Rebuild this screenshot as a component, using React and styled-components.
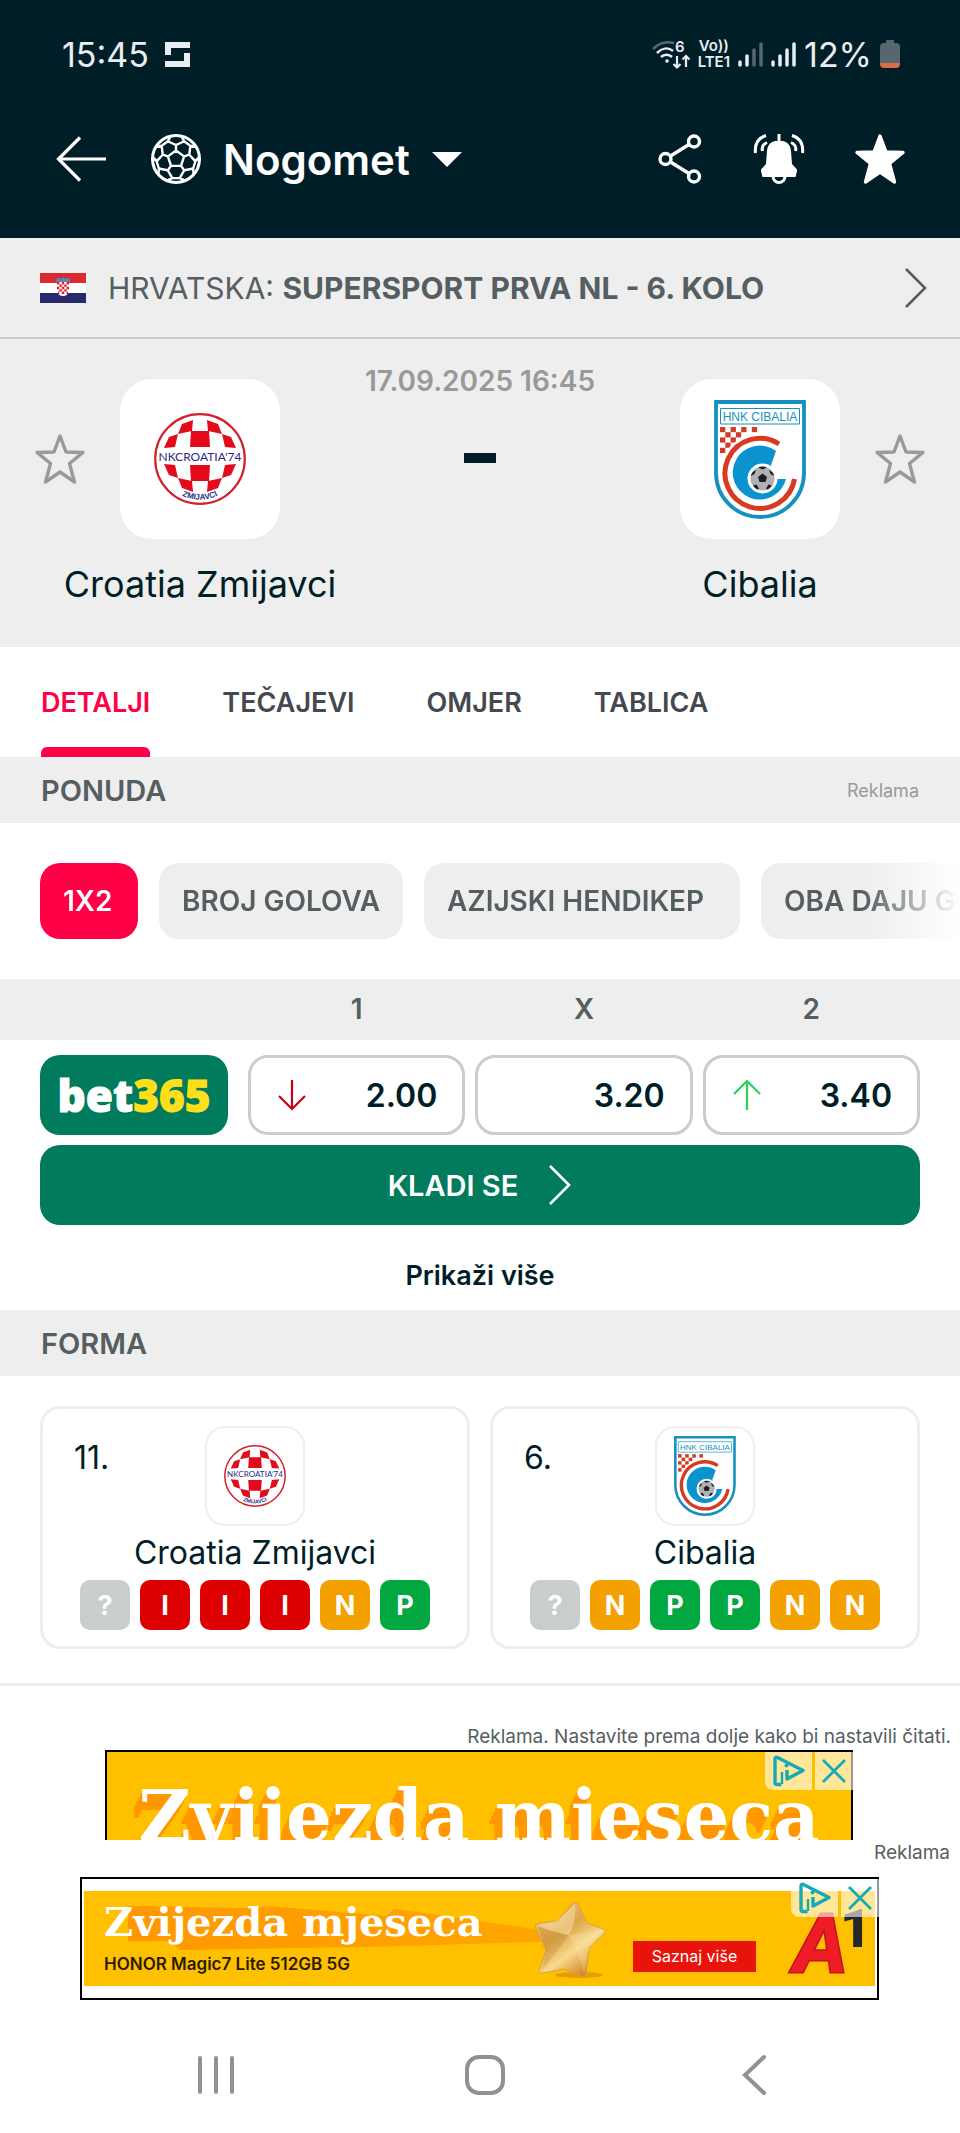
import styled, { createGlobalStyle } from 'styled-components'
import { useState } from 'react'

const GlobalStyle = createGlobalStyle`
    * {
        box-sizing: border-box;
    }
    body {
        margin: 0;
        background: #fff;
        color: #001e28;
        font-family: Inter, "Liberation Sans", sans-serif;
    }
    button {
        font-family: inherit;
        border: 0;
        margin: 0;
        padding: 0;
        background: none;
        color: inherit;
        cursor: pointer;
    }
    a {
        color: inherit;
        text-decoration: none;
    }
    h1, h2, p {
        margin: 0;
    }
    svg {
        display: block;
        flex: none;
        overflow: visible;
    }
`

const Page = styled.div`
    display: flex;
    flex-direction: column;
    min-height: 100vh;
`

/* ---------- header ---------- */

const Header = styled.header`
    background: #001e28;
    color: #fff;
    padding: 14px 0;
`

const StatusBar = styled.div`
    display: flex;
    align-items: center;
    justify-content: space-between;
    height: 80px;
    padding: 0 60px 0 62px;
    font-size: 34px;
    color: #e9eef2;
`

const StatusGroup = styled.div`
    display: flex;
    align-items: center;
    gap: ${props => props.$gap}px;
`

const Volte = styled.div`
    display: flex;
    flex-direction: column;
    font-size: 15px;
    line-height: 16px;
    font-weight: 600;
    text-align: center;
`

const Toolbar = styled.div`
    display: flex;
    align-items: center;
    height: 130px;
    padding: 0 55px;
`

const SportButton = styled.button`
    display: flex;
    align-items: center;
    gap: 22px;
    margin-left: 44px;
`

const SportTitle = styled.h1`
    font-size: 42px;
    font-weight: 600;
`

const Actions = styled.div`
    display: flex;
    align-items: center;
    gap: 50px;
    margin-left: auto;
`

const LeagueLink = styled.a`
    display: flex;
    align-items: center;
    gap: 22px;
    height: 101px;
    padding: 0 32px 0 40px;
    background: #eee;
    border-bottom: 2px solid #c8cdcd;
    color: #555e61;
    font-size: 30px;
    svg:last-child {
        margin-left: auto;
    }
`

/* ---------- match ---------- */

const Match = styled.section`
    display: grid;
    grid-template-columns: minmax(0, 5fr) minmax(0, 2fr) minmax(0, 5fr);
    height: 308px;
    padding-top: 24px;
    background: #eee;
`

const Team = styled.div`
    display: grid;
    grid-template-columns: 1fr 160px 1fr;
    justify-items: center;
    align-content: start;
    align-items: center;
    row-gap: 15px;
    padding-top: 16px;
`

const TeamLogo = styled.div`
    grid-column: 2;
    grid-row: 1;
    display: flex;
    align-items: center;
    justify-content: center;
    width: 160px;
    height: 160px;
    border-radius: 32px;
    background: #fff;
`

const FavButton = styled.button`
    grid-column: ${props => props.$side === 'left' ? 1 : 3};
    grid-row: 1;
`

const TeamName = styled.h2`
    grid-column: 1 / -1;
    font-size: 36px;
    line-height: 60px;
    font-weight: 400;
`

const Kickoff = styled.div`
    display: flex;
    flex-direction: column;
    align-items: center;
    white-space: nowrap;
`

const DateText = styled.time`
    color: #999;
    font-size: 28px;
    line-height: 36px;
    font-weight: 600;
`

const ScoreDash = styled.div`
    width: 32px;
    height: 10px;
    margin-top: 54px;
    background: #001e28;
`

/* ---------- tabs and chips ---------- */

const Tabs = styled.nav`
    display: flex;
    gap: 72px;
    height: 110px;
    padding: 0 41px;
`

const Tab = styled.button`
    display: flex;
    flex-direction: column;
    justify-content: center;
    position: relative;
    font-size: 27px;
    font-weight: 600;
    color: ${props => props.$active ? '#ff0046' : '#44484f'};
    &::after {
        content: "";
        display: ${props => props.$active ? 'block' : 'none'};
        position: absolute;
        left: 0;
        right: 0;
        bottom: 0;
        height: 10px;
        border-radius: 6px 6px 0 0;
        background: #ff0046;
    }
`

const SectionTitle = styled.div`
    display: flex;
    align-items: center;
    justify-content: space-between;
    height: 66px;
    padding: 0 41px;
    background: #eee;
    color: #555e61;
    h2 {
        font-size: 29px;
        font-weight: 600;
    }
    span {
        color: #999;
        font-size: 18px;
    }
`

const Chips = styled.div`
    display: grid;
    grid-template-columns: 98px 244px 316px 270px;
    gap: 21px;
    padding: 40px 0 40px 40px;
    overflow: hidden;
    mask-image: linear-gradient(to right, #000 90%, transparent 100%);
`

const Chip = styled.button`
    height: 76px;
    padding: 0 23px;
    border-radius: 20px;
    font-size: 28px;
    font-weight: 600;
    text-align: left;
    white-space: nowrap;
    background: ${props => props.$active ? '#ff0046' : '#eee'};
    color: ${props => props.$active ? '#fff' : '#555e61'};
`

/* ---------- odds ---------- */

const OddsTable = styled.table`
    display: block;
    tr {
        display: grid;
        grid-template-columns: 198px 1fr 1fr 1fr;
        gap: 10px;
        padding: 0 40px;
    }
    thead, tbody {
        display: block;
    }
    thead {
        background: #eee;
    }
    tbody {
        padding: 15px 0 10px;
    }
    th, td {
        padding: 0;
    }
    thead th {
        height: 61px;
        line-height: 61px;
        font-size: 28px;
        font-weight: 600;
        color: #555e61;
    }
    tbody th {
        padding-right: 10px;
    }
`

const Bookmaker = styled.a`
    display: flex;
    align-items: center;
    justify-content: center;
    height: 80px;
    border-radius: 20px;
    background: #007b5b;
    color: #fff;
    font-family: "Open Sans", "Noto Sans", sans-serif;
    font-size: 44px;
    font-weight: 800;
    -webkit-text-stroke: 1px currentColor;
    span {
        color: #ffdf1b;
    }
`

const OddButton = styled.button`
    display: flex;
    align-items: center;
    justify-content: space-between;
    width: 100%;
    height: 80px;
    padding: 0 25px 0 27px;
    border: 3px solid #c8cdcd;
    border-radius: 20px;
    font-size: 32px;
    font-weight: 600;
    span {
        margin-left: auto;
    }
`

const BetButton = styled.button`
    display: flex;
    align-items: center;
    justify-content: center;
    gap: 30px;
    height: 80px;
    margin: 0 40px;
    border-radius: 20px;
    background: #007b5b;
    color: #fff;
    font-size: 29px;
    font-weight: 600;
`

const ShowMore = styled.button`
    height: 85px;
    padding-top: 16px;
    font-size: 27px;
    font-weight: 600;
`

/* ---------- form ---------- */

const FormGrid = styled.section`
    display: grid;
    grid-template-columns: 1fr 1fr;
    gap: 20px;
    padding: 30px 40px 34px;
    border-bottom: 3px solid #eee;
`

const FormCard = styled.article`
    display: grid;
    grid-template-columns: 1fr 100px 1fr;
    justify-items: center;
    align-content: start;
    height: 243px;
    padding-top: 17px;
    border: 3px solid #eee;
    border-radius: 20px;
`

const Rank = styled.span`
    justify-self: start;
    padding: 12px 0 0 31px;
    font-size: 32px;
    line-height: 40px;
`

const SmallLogo = styled.div`
    display: flex;
    align-items: center;
    justify-content: center;
    grid-column: 2;
    width: 100px;
    height: 100px;
    border: 2px solid #eee;
    border-radius: 20px;
`

const FormName = styled.p`
    grid-column: 1 / -1;
    font-size: 32px;
    line-height: 54px;
`

const Results = styled.div`
    grid-column: 1 / -1;
    display: flex;
    gap: 10px;
`

const resultColors = {
    '?': '#c8cdcd',
    I: '#dc0000',
    N: '#f3a000',
    P: '#00a83f'
}

const Result = styled.span`
    display: flex;
    align-items: center;
    justify-content: center;
    width: 50px;
    height: 50px;
    border-radius: 10px;
    background: ${props => resultColors[props.$result]};
    color: #fff;
    font-size: 27px;
    font-weight: 700;
`

/* ---------- ads ---------- */

const AdSpace = styled.div`
    padding-top: 38px;
`

const AdLabel = styled.p`
    padding-right: ${props => props.$inset}px;
    color: #555e61;
    font-size: 19px;
    line-height: 26px;
    text-align: right;
`

const AdWindow = styled.div`
    height: 90px;
    overflow: hidden;
    padding: 0 107px 0 105px;
`

const AdLarge = styled.a`
    display: flex;
    justify-content: center;
    position: relative;
    height: 180px;
    padding-top: 20px;
    border: 2px solid #000;
    background: #ffc000;
`

const AdTitle = styled.span`
    font-family: "DejaVu Serif", serif;
    font-weight: 700;
    font-size: ${props => props.$large ? 72 : 40}px;
    line-height: ${props => props.$large ? 90 : 48}px;
    color: #fff;
    white-space: nowrap;
    text-shadow: ${props => props.$large
        ? '-2px 4px 0 #ff9800, -4px 8px 0 #ff9800, -6px 12px 0 #ff9800, -8px 16px 0 #ff9800'
        : 'none'};
`

const AdBanner = styled.a`
    position: relative;
    margin: 11px 81px 16px 80px;
    padding: 12px 2px;
    border: 2px solid #000;
`

const AdBody = styled.span`
    position: relative;
    isolation: isolate;
    display: flex;
    align-items: center;
    height: 95px;
    padding-left: 20px;
    background: #ffc000;
    /* long shadow that runs from the headline to the star */
    &::before {
        content: "";
        position: absolute;
        z-index: -1;
        left: 44px;
        top: 15px;
        width: 430px;
        height: 44px;
        background: linear-gradient(to right, #ff9800, #ffa600);
        clip-path: polygon(0 0, 30% 5%, 32% 0, 60% 22%, 62% 6%, 100% 60%, 100% 80%, 60% 92%, 12% 100%, 10% 80%, 0 80%);
    }
`

const AdCopy = styled.span`
    display: flex;
    flex-direction: column;
    align-self: flex-start;
    padding-top: 7px;
    font-size: 17px;
    font-weight: 600;
    line-height: 36px;
    color: #2a1c00;
`

const StarSlot = styled.span`
    margin-left: auto;
`

const AdCta = styled.span`
    align-self: flex-end;
    width: 123px;
    margin: 0 34px 14px 26px;
    background: #e8140c;
    color: #fff;
    font-size: 16px;
    line-height: 31px;
    text-align: center;
`

const LogoSlot = styled.span`
    padding-right: 9px;
`

const AdControls = styled.span`
    position: absolute;
    top: 0;
    right: -2px;
    display: flex;
    gap: 3px;
    span {
        display: flex;
        align-items: center;
        justify-content: center;
        width: 38px;
        height: 38px;
        background: rgba(255, 255, 255, 0.6);
    }
    span:first-child {
        width: 47px;
        border-bottom-left-radius: 8px;
    }
`

const PhoneNav = styled.nav`
    display: grid;
    grid-template-columns: 1fr 1fr 1fr;
    justify-items: center;
    align-items: center;
    height: 118px;
    margin: auto 72px 0 82px;
`

/* ---------- icons ---------- */

const STAR = 'M25 2L31 18L48 18.500L34.500 29.500L39.500 48L25 38L10.500 48L15.500 29.500L2 18.500L19 18Z'

// point on a circle round the middle of the ball, angle from the top
const polar = (radius, angle) => {
    const rad = (angle - 90) * Math.PI / 180
    return `${(25 + radius * Math.cos(rad)).toFixed(1)} ${(25 + radius * Math.sin(rad)).toFixed(1)}`
}

const seams = [0, 72, 144, 216, 288].map(a =>
    `M${polar(8.5, a)}L${polar(8.5, a + 72)}M${polar(8.5, a)}L${polar(14, a)}` +
    `M${polar(23, a - 14)}L${polar(19.5, a - 25)}L${polar(14, a)}L${polar(19.5, a + 25)}L${polar(23, a + 14)}` +
    `M${polar(19.5, a + 25)}L${polar(19.5, a + 47)}`
).join('')

const BallIcon = () => (
    <svg width="50" height="50" viewBox="0 0 50 50" fill="none" stroke="currentColor" strokeWidth="2.4">
        <circle cx="25" cy="25" r="23.500" strokeWidth="3" />
        <path d={seams} />
    </svg>
)

const BackIcon = () => (
    <svg width="52" height="50" viewBox="0 0 52 50" fill="none" stroke="currentColor" strokeWidth="3.2">
        <path d="M25 3.500L3.500 25L25 46.500M3.500 25H51" />
    </svg>
)

const ShareIcon = () => (
    <svg width="44" height="50" viewBox="0 0 44 50" fill="none" stroke="currentColor" strokeWidth="3.4">
        <circle cx="6.500" cy="25" r="5.500" />
        <circle cx="35" cy="7.500" r="5.500" />
        <circle cx="35" cy="42.500" r="5.500" />
        <path d="M11.500 22L30 10.500M11.500 28L30 39.500" />
    </svg>
)

const BellIcon = () => (
    <svg width="52" height="50" viewBox="0 0 52 50" fill="none" stroke="currentColor" strokeWidth="3">
        <path d="M26 0V9" />
        <path fill="currentColor" stroke="none" d="M22 7H30C34.500 8 37.500 11 38 17L39 30L44 35.500V37L42.500 43H9.500L8 37V35.500L13 30L14 17C14.500 11 17.500 8 22 7Z" />
        <path d="M20 42.500A6 6 0 0 0 32 42.500" />
        <path d="M13 1.500C5 4 1.500 10 2.500 19M14 8.500C9.500 10.500 8.500 13 9.500 17M39 1.500C47 4 50.500 10 49.500 19M38 8.500C42.500 10.500 43.500 13 42.500 17" />
    </svg>
)

const StarIcon = ({ filled }) => (
    <svg width="50" height="50" viewBox="0 0 50 50" fill={filled ? '#fff' : 'none'} stroke={filled ? '#fff' : '#999'} strokeWidth="3.4" strokeLinejoin="round">
        <path d={STAR} />
    </svg>
)

const Chevron = () => (
    <svg width="24" height="42" viewBox="0 0 24 42" fill="none" stroke="currentColor" strokeWidth="2.6">
        <path d="M2 2L21 21L2 40" />
    </svg>
)

const TrendIcon = ({ up }) => (
    <svg width="28" height="32" viewBox="0 0 28 32" fill="none" stroke={up ? '#2fd05c' : '#c80014'} strokeWidth="2.2">
        <path d={up ? 'M14 31V2M1 15L14 2L27 15' : 'M14 1V30M1 17L14 30L27 17'} />
    </svg>
)

const AppMark = () => (
    <svg width="25" height="26" viewBox="0 0 25 26" fill="currentColor">
        <path d="M0 1H25V7H6V12H0ZM0 14H6V12H0ZM25 12V26H0V20H19V12Z" />
    </svg>
)

const WifiIcon = () => (
    <svg width="38" height="28" viewBox="0 0 38 28" fill="none" stroke="currentColor" strokeWidth="2.5">
        <path d="M1 9C7 3 14 1 22 3" stroke="#56676f" />
        <path d="M5 13C10 8 16 7 21 11M9 17C12 14 17 14 20 17" />
        <circle cx="15" cy="21" r="1.800" fill="currentColor" stroke="none" />
        <path d="M25 16V27M21.500 24L25 27.500L28.500 24M34 27V16M30.500 19.500L34 16L37.500 19.500" strokeWidth="2.2" />
        <text x="23" y="12" fontSize="15" fontWeight="600" fill="currentColor" stroke="none">6</text>
    </svg>
)

const SignalIcon = ({ level }) => (
    <svg width="25" height="28" viewBox="0 0 25 28" strokeWidth="3.5" strokeLinecap="round">
        {[21, 15, 9, 3].map((top, i) => (
            <path key={top} d={`M${2 + i * 7} ${top + 1}V25`} stroke={i < level ? '#e9eef2' : '#56676f'} />
        ))}
    </svg>
)

const BatteryIcon = () => (
    <svg width="20" height="28" viewBox="0 0 20 28">
        <path d="M6 0H14V3H16Q20 3 20 7V23H0V7Q0 3 4 3H6Z" fill="#56676f" />
        <path d="M0 23H20V24Q20 28 16 28H4Q0 28 0 24Z" fill="#dc6b48" />
    </svg>
)

const Flag = () => (
    <svg width="46" height="30" viewBox="0 0 46 30">
        <path fill="#fff" d="M0 0H46V30H0Z" />
        <path fill="#d92a31" d="M0 0H46V10H0Z" />
        <path fill="#262a6c" d="M0 20H46V30H0Z" />
        <path fill="#5b86b5" d="M15.500 7L18 4.500L20.500 6L23 4L25.500 6L28 4.500L30.500 7L29 10H17Z" />
        <path fill="#fff" d="M17 9H29V18Q28 23 23 23Q18 23 17 18Z" />
        <path fill="#e0202b" d="M17 9H19.400V11.400H17ZM21.800 9H24.200V11.400H21.800ZM26.600 9H29V11.400H26.600ZM19.400 11.400H21.800V13.800H19.400ZM24.200 11.400H26.600V13.800H24.200ZM17 13.800H19.400V16.200H17ZM21.800 13.800H24.200V16.200H21.800ZM26.600 13.800H29V16.200H26.600ZM19.400 16.200H21.800V18.600H19.400ZM24.200 16.200H26.600V18.600H24.200ZM21.800 18.600H24.200V21H21.800ZM18 18.600H19.400V21H18ZM26.600 18.600H28V21H26.600Z" />
    </svg>
)

const crestChecks = [
    [[28, 11], [39, 7], [38, 18], [24, 21]],
    [[15, 24], [24, 21], [21, 34], [10, 35]],
    [[37, 18], [46, 18], [46, 34], [36, 34]]
]

const flip = (points, fx, fy) => points.map(([x, y]) => `${fx ? 92 - x : x},${fy ? 86 - y : y}`).join(' ')

const CroatiaCrest = ({ size, arcId }) => (
    <svg width={size} height={size} viewBox="0 0 92 92">
        <circle cx="46" cy="46" r="44.800" fill="#fff" stroke="#d3202c" strokeWidth="2.2" />
        {crestChecks.map((points, i) => (
            <g key={i} fill="#e30a1b">
                <polygon points={flip(points, false, false)} />
                <polygon points={flip(points, true, false)} />
                <polygon points={flip(points, false, true)} />
                <polygon points={flip(points, true, true)} />
            </g>
        ))}
        <text x="46" y="48" fontFamily="Lato" fontWeight="400" fontSize="12" textAnchor="middle" fill="#2b2a85">NKCROATIA'74</text>
        <path id={arcId} d="M13 70A41 41 0 0 0 79 70" fill="none" />
        <text fontFamily="Liberation Sans" fontWeight="700" fontSize="8" textAnchor="middle" fill="#2b2a85">
            <textPath href={'#' + arcId} startOffset="50%">ZMIJAVCI</textPath>
        </text>
    </svg>
)

const flagChecks = [[0, 0], [2, 0], [4, 0], [6, 0], [1, 1], [3, 1], [0, 2], [2, 2], [1, 3], [0, 4]]

const CibaliaCrest = ({ height }) => (
    <svg width={height * 92 / 119} height={height} viewBox="0 0 92 119">
        <path d="M2 2H90V73A44 44 0 0 1 2 73Z" fill="#fff" stroke="#1790c0" strokeWidth="3.8" />
        <path d="M6.500 8.500H85.500V24H6.500Z" fill="none" stroke="#1790c0" />
        <text x="46" y="20.500" fontFamily="Liberation Sans" fontSize="12" textAnchor="middle" fill="#1790c0">HNK CIBALIA</text>
        {flagChecks.map(([col, row]) => (
            <rect key={col + '-' + row} x={6 + col * 5.3} y={27 + row * 5.2} width="5.3" height="5.2" fill="#d13c28" />
        ))}
        <path d="M65 44A35 35 0 1 0 80.500 79" fill="none" stroke="#fff" strokeWidth="10" />
        <path d="M65 44A35 35 0 1 0 80.500 79" fill="none" stroke="#d8391f" strokeWidth="5" />
        <path d="M62 51A27 27 0 1 0 72 79H60L57 65Z" fill="#0a93cf" />
        <circle cx="48.500" cy="78.500" r="15" fill="#fff" />
        <circle cx="48.500" cy="78.500" r="12" fill="#aeb0b3" />
        <path fill="#1e1e20" d="M48.500 73.500L53 77L51.500 82H45.500L44 77ZM44 67.500L48.500 69.500L53 67.500Q48.500 65.500 44 67.500ZM36.800 76L40.500 74L42 70Q37.500 72 36.800 76ZM60.200 76L56.500 74L55 70Q59.500 72 60.200 76ZM39 85.500L42.500 84.500L45 88.500L43.500 89.500Q40.500 88 39 85.500ZM58 85.500L54.500 84.500L52 88.500L53.500 89.500Q56.500 88 58 85.500Z" />
    </svg>
)

const AdChoices = () => (
    <AdControls>
        <span>
            <svg width="34" height="34" viewBox="0 0 34 34" fill="none" stroke="#14aab8" strokeWidth="3.4" strokeLinejoin="round">
                <path d="M9.500 30.500H5Q3 30.500 3 28.500V5Q3 2.500 5.500 3.500L31 16.500L15 25V16" />
                <path d="M10 18V30" strokeWidth="2.4" />
                <circle cx="14.500" cy="11.500" r="2" fill="#14aab8" stroke="none" />
            </svg>
        </span>
        <span>
            <svg width="24" height="24" viewBox="0 0 24 24" stroke="#14aab8" strokeWidth="2.8">
                <path d="M1 1L23 23M23 1L1 23" />
            </svg>
        </span>
    </AdControls>
)

const GoldStar = () => (
    <svg width="74" height="80" viewBox="0 0 74 80">
        <defs>
            <linearGradient id="gold" x1="0" y1="0" x2="0.7" y2="1">
                <stop offset="0" stopColor="#f3d083" />
                <stop offset="0.45" stopColor="#dda548" />
                <stop offset="0.7" stopColor="#f8d98c" />
                <stop offset="1" stopColor="#cf7d1c" />
            </linearGradient>
        </defs>
        <ellipse cx="46" cy="76" rx="24" ry="3" fill="#e0a000" />
        <path d="M40 4Q43 2 45 5L54 24L70 30Q74 32 71 35L56 49L53 75Q51 79 48 77L31 70L10 74Q5 74 7 69L13 51L3 30Q1 25 6 24L24 22Z" fill="url(#gold)" stroke="#dba044" />
        <path d="M42 5Q44 22 36 36Q18 34 5 26L24 22Z" fill="#fff1c4" opacity="0.4" />
        <path d="M36 36Q52 34 70 31L56 49L51 76Q48 56 36 36Z" fill="#fff1c4" opacity="0.25" />
        <path d="M36 36Q24 52 9 72L13 51L5 28Z" fill="#b87722" opacity="0.25" />
    </svg>
)

const OperatorLogo = () => (
    <svg width="76" height="80" viewBox="0 0 76 80">
        <text x="4" y="73" fontFamily="Roboto" fontWeight="700" fontStyle="italic" fontSize="82" fill="#ee1c25" stroke="#c4121b" strokeWidth="3" paintOrder="stroke">A</text>
        <text x="50" y="48" fontFamily="Roboto" fontWeight="900" fontSize="54" fill="#26262a">1</text>
    </svg>
)

/* ---------- data ---------- */

const tabs = ['DETALJI', 'TEČAJEVI', 'OMJER', 'TABLICA']
const markets = ['1X2', 'BROJ GOLOVA', 'AZIJSKI HENDIKEP', 'OBA DAJU GOL']
const odds = [
    { value: '2.00', trend: 'down' },
    { value: '3.20' },
    { value: '3.40', trend: 'up' }
]
const form = [
    { rank: '11.', name: 'Croatia Zmijavci', results: ['?', 'I', 'I', 'I', 'N', 'P'], crest: <CroatiaCrest size={62} arcId="arc-small" /> },
    { rank: '6.', name: 'Cibalia', results: ['?', 'N', 'P', 'P', 'N', 'N'], crest: <CibaliaCrest height={80} /> }
]

const AdSlots = () => (
    <>
        <AdSpace>
            <AdLabel $inset={9}>Reklama. Nastavite prema dolje kako bi nastavili čitati.</AdLabel>
            <AdWindow>
                <AdLarge href="#oglas">
                    <AdTitle $large>Zvijezda mjeseca</AdTitle>
                    <AdChoices />
                </AdLarge>
            </AdWindow>
        </AdSpace>
        <AdLabel $inset={10}>Reklama</AdLabel>
        <AdBanner href="#oglas-a1">
            <AdBody>
                <AdCopy>
                    <AdTitle>Zvijezda mjeseca</AdTitle>
                    HONOR Magic7 Lite 512GB 5G
                </AdCopy>
                <StarSlot><GoldStar /></StarSlot>
                <AdCta>Saznaj više</AdCta>
                <LogoSlot><OperatorLogo /></LogoSlot>
            </AdBody>
            <AdChoices />
        </AdBanner>
    </>
)

const App = () => {
    const [tab, setTab] = useState('DETALJI')
    const [market, setMarket] = useState('1X2')

    return (
        <Page>
            <GlobalStyle />
            <Header>
                <StatusBar>
                    <StatusGroup $gap={16}>
                        <span>15:45</span>
                        <AppMark />
                    </StatusGroup>
                    <StatusGroup $gap={8}>
                        <WifiIcon />
                        <Volte>
                            <span>Vo))</span>
                            <span>LTE1</span>
                        </Volte>
                        <SignalIcon level={2} />
                        <SignalIcon level={4} />
                        <span>12%</span>
                        <BatteryIcon />
                    </StatusGroup>
                </StatusBar>
                <Toolbar>
                    <button aria-label="Natrag"><BackIcon /></button>
                    <SportButton>
                        <BallIcon />
                        <SportTitle>Nogomet</SportTitle>
                        <svg width="30" height="15" viewBox="0 0 30 15"><path d="M0 0H30L15 15Z" fill="#fff" /></svg>
                    </SportButton>
                    <Actions>
                        <button aria-label="Podijeli"><ShareIcon /></button>
                        <button aria-label="Obavijesti"><BellIcon /></button>
                        <button aria-label="Favorit"><StarIcon filled /></button>
                    </Actions>
                </Toolbar>
            </Header>

            <LeagueLink href="#liga">
                <Flag />
                <span>HRVATSKA: <b>SUPERSPORT PRVA NL - 6. KOLO</b></span>
                <Chevron />
            </LeagueLink>

            <Match>
                <Team>
                    <FavButton $side="left" aria-label="Prati Croatia Zmijavci"><StarIcon /></FavButton>
                    <TeamLogo><CroatiaCrest size={92} arcId="arc-large" /></TeamLogo>
                    <TeamName>Croatia Zmijavci</TeamName>
                </Team>
                <Kickoff>
                    <DateText>17.09.2025 16:45</DateText>
                    <ScoreDash />
                </Kickoff>
                <Team>
                    <TeamLogo><CibaliaCrest height={119} /></TeamLogo>
                    <FavButton $side="right" aria-label="Prati Cibalia"><StarIcon /></FavButton>
                    <TeamName>Cibalia</TeamName>
                </Team>
            </Match>

            <Tabs>
                {tabs.map(name => (
                    <Tab key={name} $active={name === tab} onClick={() => setTab(name)}>{name}</Tab>
                ))}
            </Tabs>

            <SectionTitle>
                <h2>PONUDA</h2>
                <span>Reklama</span>
            </SectionTitle>
            <Chips>
                {markets.map(name => (
                    <Chip key={name} $active={name === market} onClick={() => setMarket(name)}>{name}</Chip>
                ))}
            </Chips>

            <OddsTable>
                <thead>
                    <tr>
                        <td />
                        <th>1</th>
                        <th>X</th>
                        <th>2</th>
                    </tr>
                </thead>
                <tbody>
                    <tr>
                        <th><Bookmaker href="#bet365">bet<span>365</span></Bookmaker></th>
                        {odds.map(odd => (
                            <td key={odd.value}>
                                <OddButton>
                                    {odd.trend && <TrendIcon up={odd.trend === 'up'} />}
                                    <span>{odd.value}</span>
                                </OddButton>
                            </td>
                        ))}
                    </tr>
                </tbody>
            </OddsTable>
            <BetButton>KLADI SE <Chevron /></BetButton>
            <ShowMore>Prikaži više</ShowMore>

            <SectionTitle>
                <h2>FORMA</h2>
            </SectionTitle>
            <FormGrid>
                {form.map(team => (
                    <FormCard key={team.name}>
                        <Rank>{team.rank}</Rank>
                        <SmallLogo>{team.crest}</SmallLogo>
                        <FormName>{team.name}</FormName>
                        <Results>
                            {team.results.map((result, i) => <Result key={i} $result={result}>{result}</Result>)}
                        </Results>
                    </FormCard>
                ))}
            </FormGrid>

            <AdSlots />

            <PhoneNav>
                <button aria-label="Nedavno">
                    <svg width="38" height="40" viewBox="0 0 38 40" stroke="#919191" strokeWidth="4" strokeLinecap="round"><path d="M3 3V37M19 3V37M35 3V37" /></svg>
                </button>
                <button aria-label="Početna">
                    <svg width="40" height="40" viewBox="0 0 40 40" fill="none" stroke="#919191" strokeWidth="4"><rect x="2" y="2" width="36" height="36" rx="12" /></svg>
                </button>
                <button aria-label="Natrag">
                    <svg width="26" height="40" viewBox="0 0 26 40" fill="none" stroke="#919191" strokeWidth="4" strokeLinecap="round"><path d="M23 2L4 20L23 38" /></svg>
                </button>
            </PhoneNav>
        </Page>
    )
}

export default App
